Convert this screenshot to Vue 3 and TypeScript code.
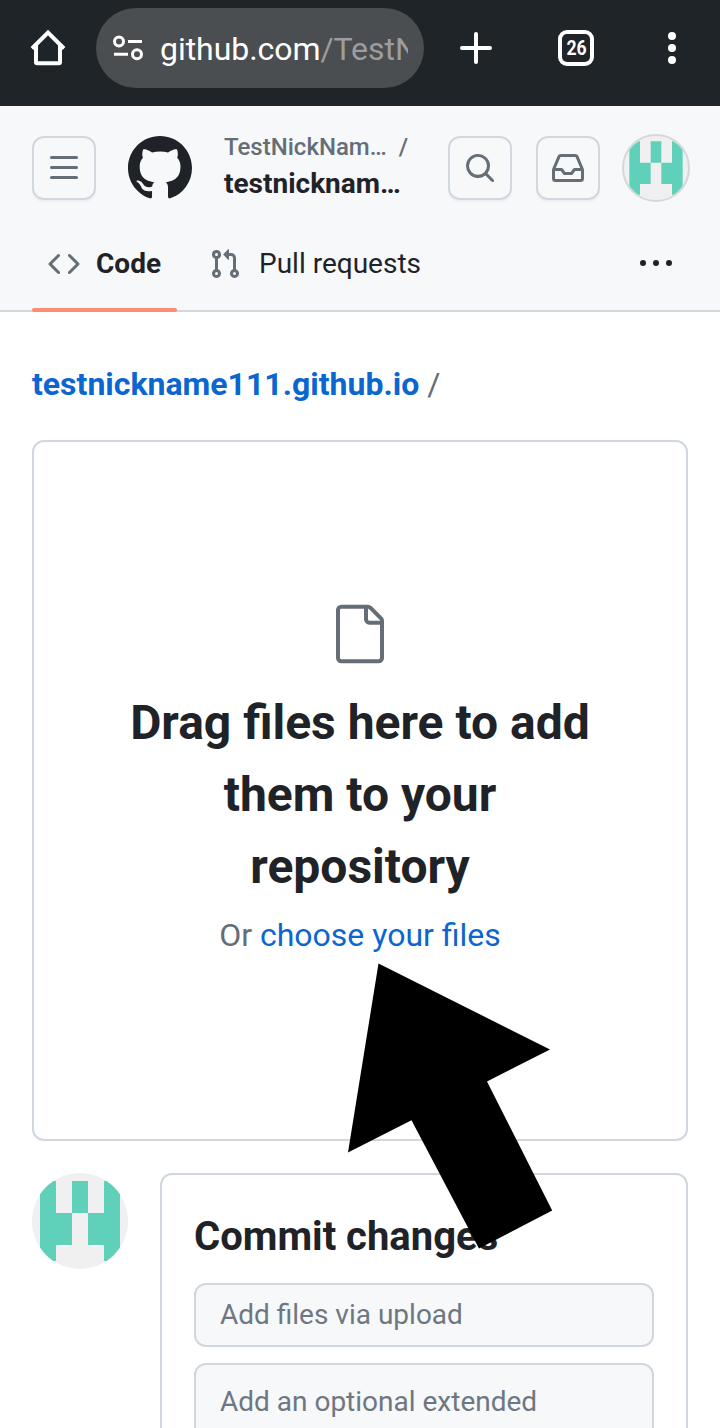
<script setup lang="ts">
interface Field {
  label: string
  tall: boolean
}

const fields: Field[] = [
  { label: 'Add files via upload', tall: false },
  { label: 'Add an optional extended', tall: true },
]

const identicon = 'M1 1h2v10H1zM9 1h2v10H9zM5 1h2v4H5zM3 5h2v4H3zM7 5h2v4H7z'
</script>

<template>
  <div class="screen">
    <div class="browser-bar">
      <svg class="home" width="40" height="40" viewBox="0 0 40 40">
        <path d="M4 20.500 20 4.500l16 16M8 17v17a1.200 1.200 0 0 0 1.200 1.200h21.600A1.200 1.200 0 0 0 32 34V17" fill="none" stroke="#fff" stroke-width="4" />
      </svg>
      <div class="address">
        <svg width="32" height="28" viewBox="0 0 32 28" fill="none" stroke="#fff">
          <circle cx="7" cy="7.500" r="4.500" stroke-width="3" />
          <circle cx="25" cy="20.300" r="4.500" stroke-width="3" />
          <path d="M16 7.500h14M2 20.300h14" stroke-width="3" />
        </svg>
        <div class="url">github.com<span>/TestN</span></div>
      </div>
      <svg class="plus" width="32" height="32" viewBox="0 0 32 32">
        <path d="M2 16h28M16 2v28" stroke="#fff" stroke-width="4" stroke-linecap="round" />
      </svg>
      <div class="tabs-count"><span>26</span></div>
      <svg class="menu" width="8" height="32" viewBox="0 0 8 32" fill="#fff">
        <circle cx="4" cy="4" r="4" /><circle cx="4" cy="16" r="4" /><circle cx="4" cy="28" r="4" />
      </svg>
    </div>

    <header class="site-header">
      <div class="top-row">
        <button class="icon-button">
          <svg width="32" height="32" viewBox="0 0 16 16"><path d="M1 2.750A.75.75 0 0 1 1.750 2h12.500a.75.75 0 0 1 0 1.500H1.750A.75.75 0 0 1 1 2.750Zm0 5A.75.75 0 0 1 1.750 7h12.500a.75.75 0 0 1 0 1.500H1.750A.75.75 0 0 1 1 7.750ZM1.750 12h12.500a.75.75 0 0 1 0 1.500H1.750a.75.75 0 0 1 0-1.500Z" /></svg>
        </button>
        <svg class="mark" width="64" height="64" viewBox="0 0 16 16"><path d="M8 0C3.58 0 0 3.58 0 8c0 3.54 2.29 6.53 5.47 7.59.4.07.55-.17.55-.38 0-.19-.01-.82-.01-1.49-2.01.37-2.53-.49-2.69-.94-.09-.23-.48-.94-.82-1.13-.28-.15-.68-.52-.01-.53.63-.01 1.08.58 1.23.82.72 1.21 1.87.87 2.33.66.07-.52.28-.87.51-1.07-1.78-.2-3.64-.89-3.64-3.95 0-.87.31-1.59.82-2.15-.08-.2-.36-1.02.08-2.12 0 0 .67-.21 2.2.82.64-.18 1.32-.27 2-.27.68 0 1.36.09 2 .27 1.53-1.04 2.2-.82 2.2-.82.44 1.1.16 1.92.08 2.12.51.56.82 1.27.82 2.15 0 3.07-1.87 3.75-3.65 3.95.29.25.54.73.54 1.48 0 1.07-.01 1.93-.01 2.2 0 .21.15.46.55.38A8.013 8.013 0 0 0 16 8c0-4.42-3.58-8-8-8Z" /></svg>
        <div class="context">
          <div class="owner">TestNickNam…<span>/</span></div>
          <div class="repo">testnicknam…</div>
        </div>
        <button class="icon-button">
          <svg width="32" height="32" viewBox="0 0 16 16"><path d="M10.680 11.740a6 6 0 0 1-7.922-8.982 6 6 0 0 1 8.982 7.922l3.040 3.040a.749.749 0 0 1-.326 1.275.749.749 0 0 1-.734-.215ZM11.500 7a4.499 4.499 0 1 0-8.997 0A4.499 4.499 0 0 0 11.500 7Z" /></svg>
        </button>
        <button class="icon-button inbox">
          <svg width="32" height="32" viewBox="0 0 16 16"><path d="M2.800 2.060A1.750 1.750 0 0 1 4.410 1h7.180c.7 0 1.333.417 1.610 1.060l2.740 6.395c.04.093.06.194.06.295v4.500A1.750 1.750 0 0 1 14.250 15H1.750A1.750 1.750 0 0 1 0 13.250v-4.500c0-.101.02-.202.06-.295Zm1.610.44a.25.25 0 0 0-.23.152L1.887 8H4.750a.75.75 0 0 1 .6.3L6.625 10h2.750l1.275-1.700a.75.75 0 0 1 .6-.3h2.863L11.820 2.652a.25.25 0 0 0-.23-.152Zm10.090 7h-2.875l-1.275 1.700a.75.75 0 0 1-.6.3h-3.500a.75.75 0 0 1-.6-.3L4.375 9.500H1.500v3.750c0 .138.112.25.25.25h12.500a.25.25 0 0 0 .25-.25Z" /></svg>
        </button>
        <div class="avatar ring">
          <svg width="64" height="64" viewBox="0 0 12 12"><path :d="identicon" /></svg>
        </div>
      </div>
      <nav class="repo-nav">
        <a class="tab active">
          <svg width="32" height="32" viewBox="0 0 16 16"><path d="m11.280 3.220 4.250 4.250a.75.75 0 0 1 0 1.060l-4.250 4.250a.749.749 0 0 1-1.275-.326.749.749 0 0 1 .215-.734L13.940 8l-3.720-3.720a.749.749 0 0 1 .326-1.275.749.749 0 0 1 .734.215Zm-6.560 0a.751.751 0 0 1 1.042.018.751.751 0 0 1 .018 1.042L2.060 8l3.720 3.720a.749.749 0 0 1-.326 1.275.749.749 0 0 1-.734-.215L.47 8.530a.75.75 0 0 1 0-1.060Z" /></svg>
          <span>Code</span>
        </a>
        <a class="tab">
          <svg width="32" height="32" viewBox="0 0 16 16"><path d="M1.500 3.250a2.250 2.250 0 1 1 3 2.122v5.256a2.251 2.251 0 1 1-1.500 0V5.372A2.250 2.250 0 0 1 1.500 3.250Zm5.677-.177L9.573.677A.25.25 0 0 1 10 .854V2.500h1A2.500 2.500 0 0 1 13.500 5v5.628a2.251 2.251 0 1 1-1.500 0V5a1 1 0 0 0-1-1h-1v1.646a.25.25 0 0 1-.427.177L7.177 3.427a.25.25 0 0 1 0-.354ZM3.750 2.500a.75.75 0 1 0 0 1.500.75.75 0 0 0 0-1.500Zm0 9.500a.75.75 0 1 0 0 1.500.75.75 0 0 0 0-1.500Zm8.250.75a.75.75 0 1 0 1.500 0 .75.75 0 0 0-1.500 0Z" /></svg>
          <span>Pull requests</span>
        </a>
        <svg class="more" width="32" height="32" viewBox="0 0 32 32">
          <circle cx="3" cy="15" r="3" /><circle cx="16" cy="15" r="3" /><circle cx="29" cy="15" r="3" />
        </svg>
      </nav>
    </header>

    <main>
      <div class="path"><a>testnickname111.github.io</a><span>/</span></div>

      <section class="dropzone">
        <svg width="64" height="64" viewBox="0 0 24 24"><path d="M3 3a2 2 0 0 1 2-2h9.982a2 2 0 0 1 1.414.586l4.018 4.018A2 2 0 0 1 21 7.018V21a2 2 0 0 1-2 2H5a2 2 0 0 1-2-2Zm2-.5a.5.5 0 0 0-.5.5v18a.5.5 0 0 0 .5.5h14a.5.5 0 0 0 .5-.5V8.500h-4a2 2 0 0 1-2-2v-4Zm10 0v4a.5.5 0 0 0 .5.5h4a.5.5 0 0 0-.146-.336l-4.018-4.018A.5.5 0 0 0 15 2.500Z" /></svg>
        <h1>Drag files here to add<br>them to your<br>repository</h1>
        <p>Or <a>choose your files</a></p>
      </section>

      <div class="commit-row">
        <div class="avatar large">
          <svg width="96" height="96" viewBox="0 0 12 12"><path :d="identicon" /></svg>
        </div>
        <section class="commit">
          <h2>Commit changes</h2>
          <div v-for="field in fields" :key="field.label" class="field" :class="{ tall: field.tall }">{{ field.label }}</div>
        </section>
      </div>
    </main>

    <svg class="pointer" width="206" height="286" viewBox="0 0 206 286">
      <path d="M30.500 .5 202 86.500 139 118.500 204.200 247.500 131 285.500 63.500 157.300 0 189.500z" />
    </svg>
  </div>
</template>

<style>
html,
body {
  margin: 0;
  overflow: hidden;
}
</style>

<style scoped>
* {
  box-sizing: border-box;
}
.screen {
  position: relative;
  width: 720px;
  height: 1428px;
  overflow: hidden;
  background: #fff;
  color: #1f2328;
  font-family: Roboto, "Liberation Sans", sans-serif;
}
svg {
  display: block;
  flex: none;
}
.browser-bar {
  height: 106px;
  padding: 8px 44px 18px 28px;
  display: flex;
  align-items: center;
  background: #1f2428;
}
.address {
  width: 328px;
  height: 80px;
  margin-left: 28px;
  padding: 0 16px;
  border-radius: 40px;
  display: flex;
  align-items: center;
  background: #4b4e51;
}
.url {
  width: 248px;
  margin-left: 16px;
  padding-top: 2px;
  overflow: hidden;
  white-space: nowrap;
  font-size: 32px;
  line-height: 44px;
  letter-spacing: -0.05px;
  color: #fff;
}
.url span {
  color: #9b9d9f;
}
.plus {
  margin-left: 36px;
}
.tabs-count {
  width: 36px;
  height: 36px;
  margin-left: 66px;
  border: 4px solid #fff;
  border-radius: 9px;
  color: #fff;
  font-size: 20px;
  font-weight: 700;
  line-height: 28px;
  display: flex;
  justify-content: center;
}
.tabs-count span {
  transform: scaleX(0.88);
}
.menu {
  margin-left: auto;
}
.site-header {
  height: 206px;
  background: #f6f8fa;
  border-bottom: 2px solid #d1d7dc;
}
.top-row {
  display: flex;
  align-items: center;
  padding: 28px 30px 0 32px;
  height: 96px;
}
.icon-button {
  width: 64px;
  height: 64px;
  padding: 0;
  display: grid;
  place-items: center;
  flex: none;
  background: #f6f8fa;
  border: 2px solid #d1d8df;
  border-radius: 12px;
  box-shadow: 0 2px 1px rgba(31, 35, 40, 0.04);
}
.icon-button svg,
.tab svg,
.dropzone svg {
  fill: #656d76;
}
.mark {
  margin-left: 32px;
  fill: #1f2328;
}
.context {
  width: 224px;
  margin-left: 32px;
  white-space: nowrap;
}
.owner {
  color: #656d76;
  font-size: 24px;
  font-weight: 500;
  line-height: 36px;
  margin-top: -4px;
}
.owner span {
  margin-left: 12px;
}
.repo {
  font-size: 28px;
  font-weight: 700;
  line-height: 38px;
}
.inbox {
  margin-left: 24px;
}
.avatar {
  flex: none;
  border-radius: 50%;
  overflow: hidden;
  background: #f0f0f0;
}
.avatar svg {
  fill: #5fd0b9;
}
.ring {
  margin-left: 22px;
  border: 2px solid #d5d8da;
}
.large {
  width: 96px;
  height: 96px;
}
.repo-nav {
  display: flex;
  height: 110px;
  padding: 0 48px 0 32px;
}
.tab {
  display: flex;
  align-items: center;
  height: 110px;
  padding: 14px 16px 0;
  font-size: 28px;
}
.tab span {
  margin-left: 16px;
  padding-bottom: 2px;
}
.tab + .tab {
  margin-left: 16px;
}
.tab + .tab span {
  margin-left: 18px;
}
.active {
  position: relative;
  font-weight: 700;
}
.active::after {
  content: "";
  position: absolute;
  left: 0;
  right: 0;
  bottom: 0;
  height: 4px;
  border-radius: 2px;
  background: #fd8c73;
}
.more {
  margin: 46px 0 0 auto;
  fill: #1f2328;
}
main {
  padding: 48px 32px 0;
}
.path {
  font-size: 32px;
  line-height: 48px;
  color: #656d76;
}
.path a {
  font-weight: 700;
  color: #0b66d0;
}
.path span {
  margin-left: 8px;
}
.dropzone {
  height: 701px;
  margin-top: 32px;
  padding-top: 160px;
  border: 2px solid #d0d7de;
  border-radius: 12px;
  display: flex;
  flex-direction: column;
  align-items: center;
}
h1 {
  margin: 21px 0 0;
  font-size: 48px;
  line-height: 72px;
  text-align: center;
  font-weight: 700;
}
.dropzone p {
  margin: 8px 0 0;
  font-size: 32px;
  line-height: 48px;
  color: #656d76;
}
.dropzone p a {
  color: #0b66d0;
}
.commit-row {
  display: flex;
  gap: 32px;
  margin-top: 32px;
}
.commit {
  flex: 1;
  height: 400px;
  padding: 32px;
  border: 2px solid #d0d7de;
  border-radius: 12px;
}
h2 {
  margin: 0 0 16px;
  font-size: 40px;
  line-height: 60px;
  font-weight: 700;
}
.field {
  height: 64px;
  margin-bottom: 16px;
  padding: 0 24px;
  border: 2px solid #d0d7de;
  border-radius: 12px;
  background: #f6f8fa;
  color: #6e7781;
  font-size: 28px;
  line-height: 60px;
}
.tall {
  height: 200px;
  padding-top: 7px;
}
/* Callout arrow laid over the page, pointing at the file chooser link. */
.pointer {
  position: absolute;
  left: 348px;
  top: 963px;
}
</style>
